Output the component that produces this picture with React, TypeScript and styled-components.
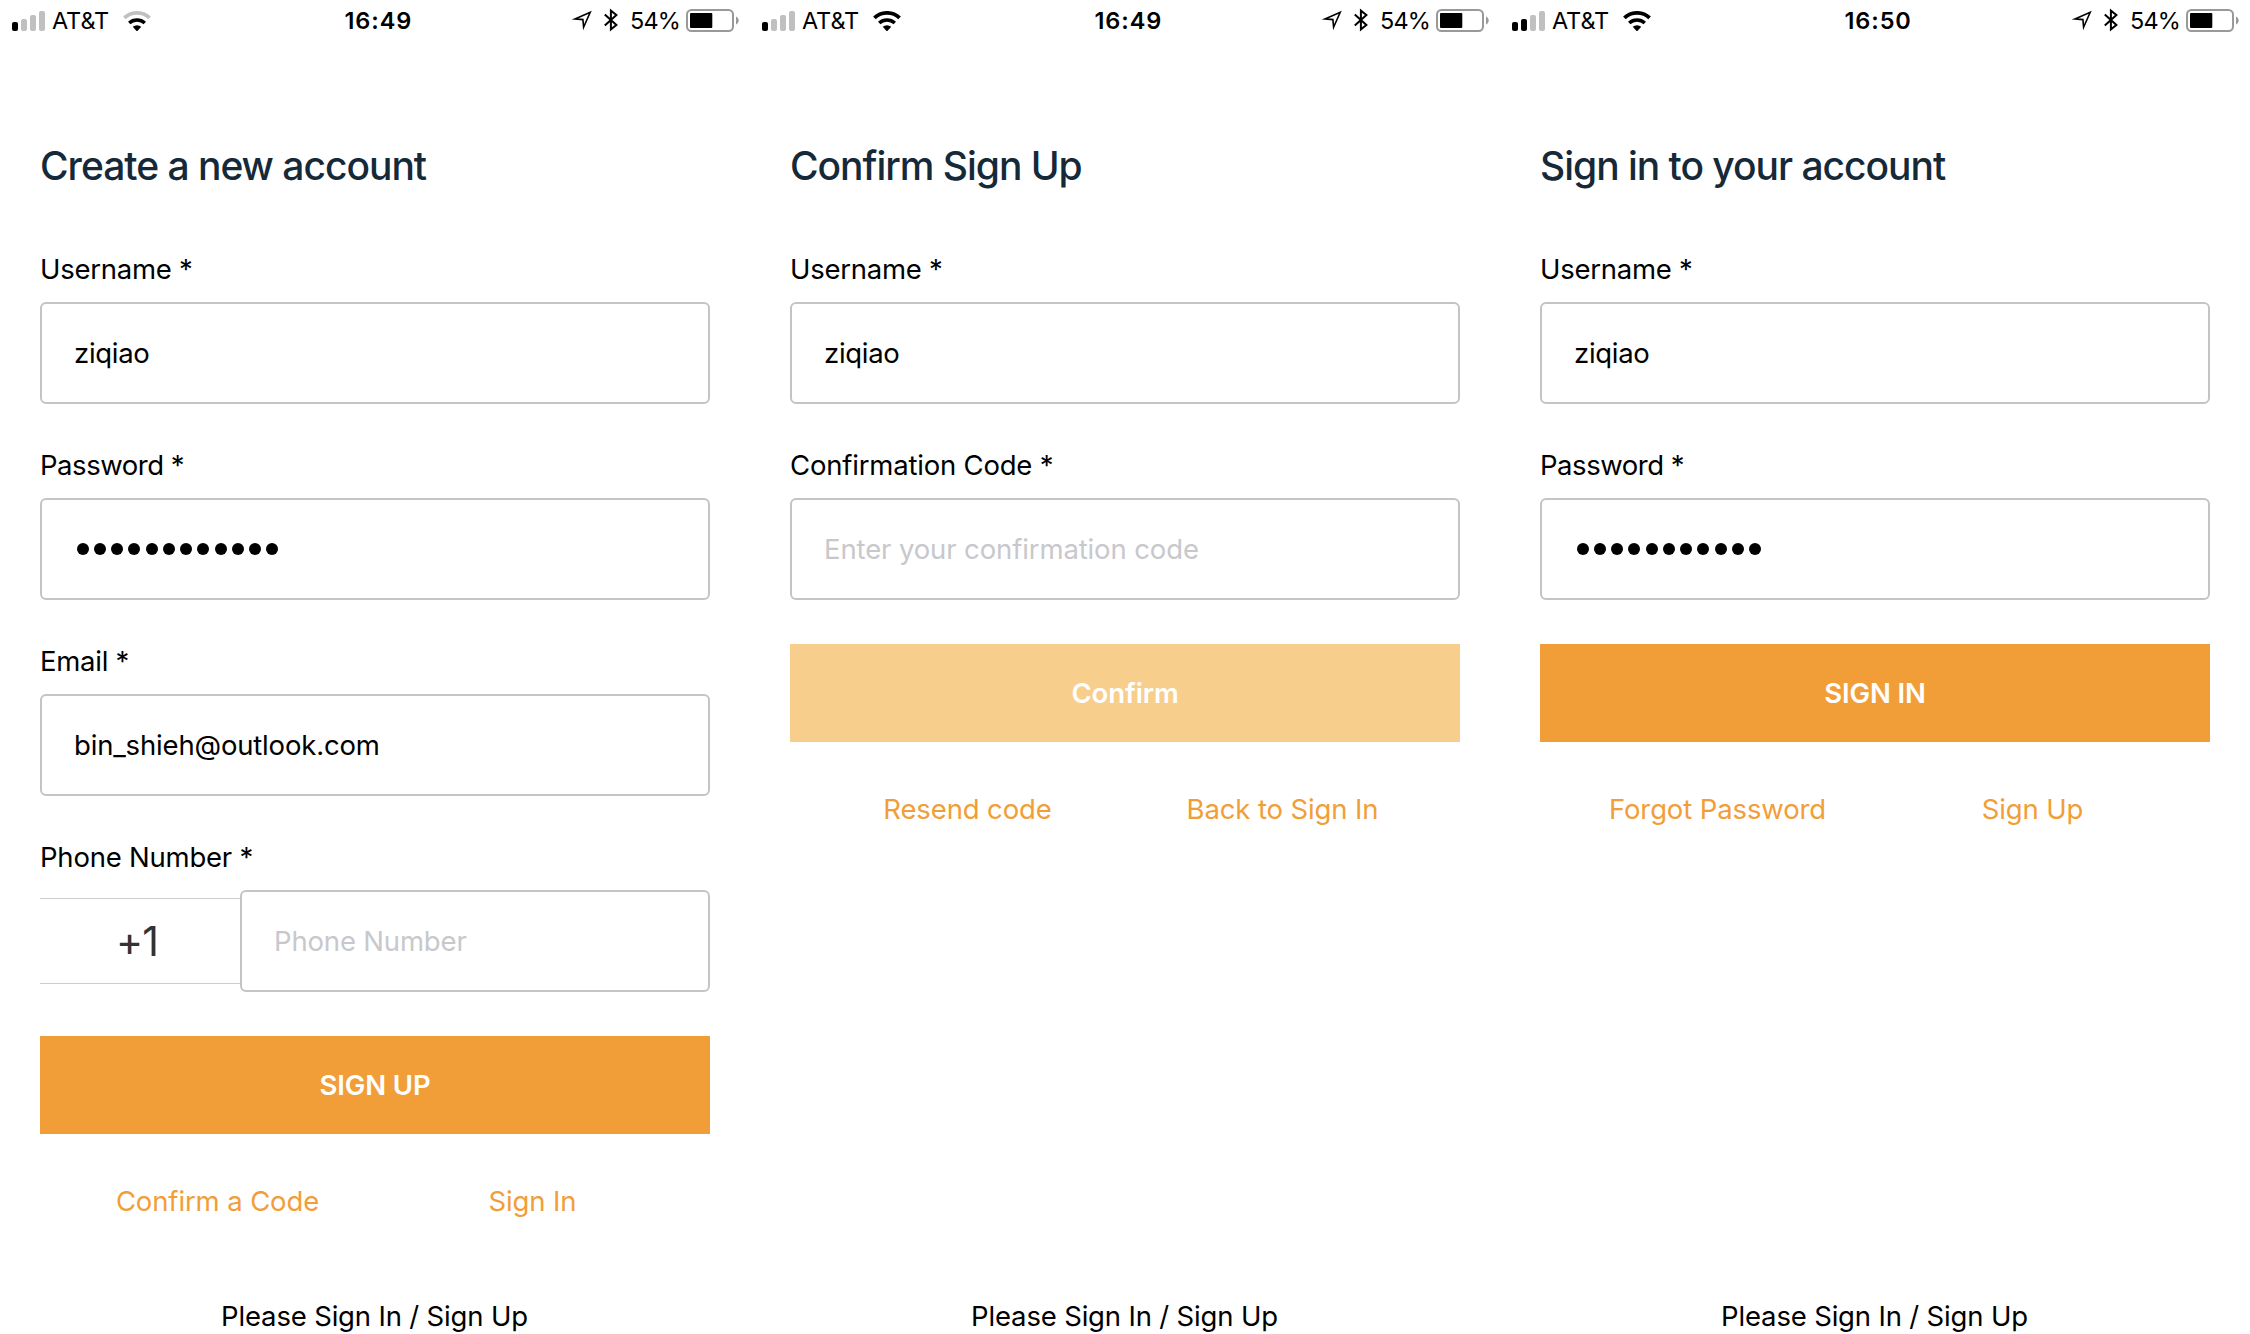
import React from 'react';
import styled, { createGlobalStyle } from 'styled-components';

const ORANGE = '#f19e38';
const ORANGE_DISABLED = '#f7ce8b';
const BORDER = '#c4c4c4';
const MUTED = '#c8c8cc';

const GlobalStyle = createGlobalStyle`
  *, *::before, *::after { box-sizing: border-box; }
  body {
    margin: 0;
    background: #fff;
    color: #000;
    font-family: Inter, "Liberation Sans", sans-serif;
    font-size: 27.5px;
    line-height: 34px;
  }
`;

const Screens = styled.div`
  display: grid;
  grid-template-columns: repeat(3, 750px);
  height: 1334px;
`;

const Screen = styled.section`
  display: flex;
  flex-direction: column;
  height: 1334px;
  overflow: hidden;
`;

const StatusBar = styled.header`
  display: grid;
  grid-template-columns: 344.5px 1fr auto;
  align-items: center;
  height: 41px;
  padding-right: 11px;
  font-size: 23.5px;
  line-height: 41px;
`;

const StatusLeft = styled.div`
  display: flex;
  align-items: center;
  padding-left: 12px;
`;

const Signal = styled.div`
  display: flex;
  align-items: flex-end;
  gap: 3px;
  height: 20px;
  margin-right: 7px;
`;

const Bar = styled.span<{ $height: number; $active: boolean }>`
  width: 6px;
  height: ${(p) => p.$height}px;
  border-radius: 2px;
  background: ${(p) => (p.$active ? '#000' : '#c0c0c0')};
`;

const Carrier = styled.span`
  width: 71px;
  letter-spacing: -0.1px;
`;

const Time = styled.time`
  font-weight: 600;
  letter-spacing: 0.9px;
`;

const StatusRight = styled.div`
  display: flex;
  align-items: center;
`;

const Charge = styled.span`
  width: 49px;
  margin: 0 7px 0 12px;
  letter-spacing: -0.8px;
`;

const BluetoothSvg = styled.svg`
  margin: -1px 0 0 11px;
`;

const Body = styled.main`
  display: flex;
  flex-direction: column;
  flex: 1;
  padding: 100px 40px 1px;
`;

const Title = styled.h1`
  margin: 0 0 61px;
  color: #152939;
  font-size: 39px;
  font-weight: 500;
  line-height: 50px;
  letter-spacing: -1.02px;
`;

const Field = styled.div`
  display: flex;
  flex-direction: column;
  gap: 16px;
  margin-bottom: 44px;
`;

const Label = styled.label<{ $spacing?: number }>`
  letter-spacing: ${(p) => p.$spacing ?? -0.26}px;
`;

const Input = styled.div<{ $placeholder?: boolean; $spacing?: number }>`
  display: flex;
  flex: 1;
  align-items: center;
  min-height: 102px;
  padding: 0 32px;
  border: 2px solid ${BORDER};
  border-radius: 6px;
  color: ${(p) => (p.$placeholder ? MUTED : '#000')};
  letter-spacing: ${(p) => p.$spacing ?? -0.17}px;
`;

const Dots = styled.span`
  display: flex;
  gap: 5.27px;
  padding-left: 2.5px;
`;

const Dot = styled.i`
  width: 12px;
  height: 12px;
  border-radius: 50%;
  background: #000;
`;

const PhoneRow = styled.div`
  display: flex;
  align-items: center;
`;

const DialCode = styled.div`
  display: flex;
  align-items: center;
  justify-content: center;
  width: 200px;
  height: 86px;
  padding-right: 6px;
  border-top: 1px solid #ccc;
  border-bottom: 1px solid #ccc;
  color: #333;
  font-size: 41px;
  letter-spacing: -1px;
`;

const Button = styled.button<{ $disabled?: boolean }>`
  height: 98px;
  padding: 0;
  border: 0;
  background: ${(p) => (p.$disabled ? ORANGE_DISABLED : ORANGE)};
  color: #fff;
  font: inherit;
  font-weight: 600;
  letter-spacing: -0.1px;
`;

const Links = styled.nav`
  display: grid;
  grid-template-columns: 1fr 1fr;
  margin-top: 50px;
  padding: 0 20px;
`;

const LinkText = styled.a`
  color: ${ORANGE};
  text-align: center;
  letter-spacing: -0.12px;
`;

const Footer = styled.footer`
  margin-top: auto;
  padding-right: 1px;
  text-align: center;
  letter-spacing: -0.17px;
`;

function Wifi({ weak }: { weak?: boolean }) {
  return (
    <svg width="28" height="20" viewBox="0 0 28 20" fill="none">
      <path d="M1.4 6.8A18.6 18.6 0 0 1 26.6 6.8" stroke={weak ? '#c0c0c0' : '#000'} strokeWidth="3.8" />
      <path d="M6.2 11.95A11.6 11.6 0 0 1 21.8 11.95" stroke="#000" strokeWidth="3.5" />
      <path d="M14 20.5L9.74 15.86A6.3 6.3 0 0 1 18.26 15.86Z" fill="#000" />
    </svg>
  );
}

function LocationArrow() {
  return (
    <svg width="21" height="21" viewBox="0 0 21 21" fill="none" stroke="#000" strokeWidth="1.6" strokeMiterlimit="10">
      <path d="M3 8.9L18.2 2.2L11.6 17.2L10.9 9.6Z" />
    </svg>
  );
}

function Bluetooth() {
  return (
    <BluetoothSvg width="14" height="24" viewBox="0 0 14 24" fill="none" stroke="#000" strokeWidth="2">
      <path d="M0.8 6.4L12.4 17L6.9 21.4V2.6L12.4 7L0.8 17.6" />
    </BluetoothSvg>
  );
}

function Battery() {
  return (
    <svg width="53" height="23" viewBox="0 0 53 23">
      <rect x="1" y="1" width="46" height="21" rx="4.5" fill="none" stroke="#999" strokeWidth="2" />
      <rect x="4" y="4" width="22.3" height="15" rx="1" fill="#000" />
      <path d="M50 7.5C53.6 9 53.6 14 50 15.5Z" fill="#999" />
    </svg>
  );
}

function Status({ bars, weak, time }: { bars: number; weak?: boolean; time: string }) {
  return (
    <StatusBar>
      <StatusLeft>
        <Signal>
          {[9, 12, 16, 20].map((h, i) => (
            <Bar key={h} $height={h} $active={i < bars} />
          ))}
        </Signal>
        <Carrier>AT&amp;T</Carrier>
        <Wifi weak={weak} />
      </StatusLeft>
      <Time>{time}</Time>
      <StatusRight>
        <LocationArrow />
        <Bluetooth />
        <Charge>54%</Charge>
        <Battery />
      </StatusRight>
    </StatusBar>
  );
}

function Username() {
  return (
    <Field>
      <Label>Username *</Label>
      <Input $spacing={-0.3}>ziqiao</Input>
    </Field>
  );
}

function Password({ length }: { length: number }) {
  return (
    <Field>
      <Label $spacing={-0.46}>Password *</Label>
      <Input>
        <Dots>
          {Array.from({ length }, (_, i) => (
            <Dot key={i} />
          ))}
        </Dots>
      </Input>
    </Field>
  );
}

function LinkPair({ left, right }: { left: string; right: string }) {
  return (
    <Links>
      <LinkText>{left}</LinkText>
      <LinkText>{right}</LinkText>
    </Links>
  );
}

export default function App() {
  return (
    <>
      <GlobalStyle />
      <Screens>
        <Screen>
          <Status bars={1} weak time="16:49" />
          <Body>
            <Title>Create a new account</Title>
            <Username />
            <Password length={12} />
            <Field>
              <Label>Email *</Label>
              <Input>bin_shieh@outlook.com</Input>
            </Field>
            <Field>
              <Label $spacing={-0.22}>Phone Number *</Label>
              <PhoneRow>
                <DialCode>+1</DialCode>
                <Input $placeholder>Phone Number</Input>
              </PhoneRow>
            </Field>
            <Button>SIGN UP</Button>
            <LinkPair left="Confirm a Code" right="Sign In" />
            <Footer>Please Sign In / Sign Up</Footer>
          </Body>
        </Screen>
        <Screen>
          <Status bars={1} time="16:49" />
          <Body>
            <Title>Confirm Sign Up</Title>
            <Username />
            <Field>
              <Label $spacing={-0.2}>Confirmation Code *</Label>
              <Input $placeholder $spacing={-0.12}>Enter your confirmation code</Input>
            </Field>
            <Button $disabled>Confirm</Button>
            <LinkPair left="Resend code" right="Back to Sign In" />
            <Footer>Please Sign In / Sign Up</Footer>
          </Body>
        </Screen>
        <Screen>
          <Status bars={2} time="16:50" />
          <Body>
            <Title>Sign in to your account</Title>
            <Username />
            <Password length={11} />
            <Button>SIGN IN</Button>
            <LinkPair left="Forgot Password" right="Sign Up" />
            <Footer>Please Sign In / Sign Up</Footer>
          </Body>
        </Screen>
      </Screens>
    </>
  );
}
